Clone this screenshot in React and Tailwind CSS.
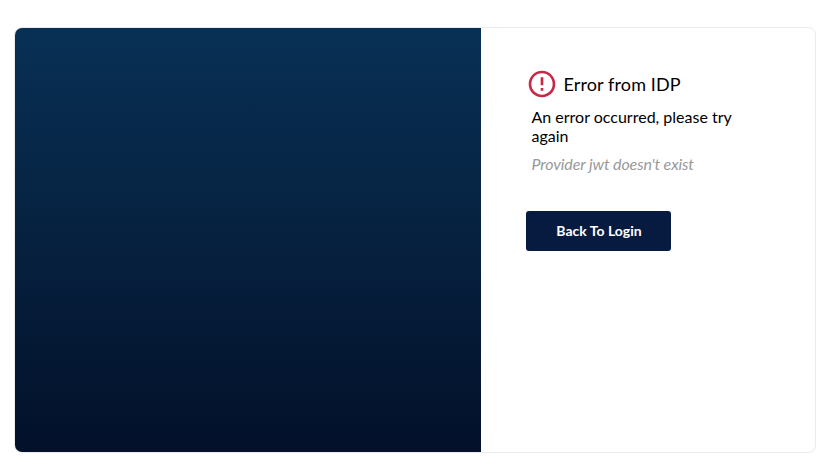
function ErrorIcon() {
  return (
    <svg viewBox="0 0 24 24" className="h-8 w-8 shrink-0" fill="#c82946">
      <path d="M11 15h2v2h-2v-2zm0-8h2v6h-2V7zm.99-5C6.47 2 2 6.48 2 12s4.47 10 9.99 10C17.52 22 22 17.52 22 12S17.52 2 11.99 2zM12 20c-4.42 0-8-3.58-8-8s3.58-8 8-8 8 3.58 8 8-3.58 8-8 8z" />
    </svg>
  );
}

export default function App() {
  return (
    <div className="h-[466px] w-full bg-white pt-[27px] pl-[14px] font-['Lato',sans-serif]">
      <main className="flex h-[426px] w-[802px] overflow-hidden rounded-lg border border-[#ebebeb]">
        <div className="w-[466px] shrink-0 bg-linear-to-b/srgb from-[#083055] via-[#06213f] to-[#03102a]" />
        <section className="flex flex-col items-start pt-10 pl-[45px] text-black">
          <div className="flex h-8 items-center gap-[5.5px]">
            <ErrorIcon />
            <h1 className="text-lg leading-6 tracking-[0.12px]">Error from IDP</h1>
          </div>
          <p className="mt-[7px] ml-[5.5px] w-[220px] text-base leading-[19px]">An error occurred, please try again</p>
          <p className="mt-[9px] ml-[5.5px] text-base leading-[19px] tracking-[-0.12px] text-[#999] italic">Provider jwt doesn't exist</p>
          <button className="mt-[38px] h-10 w-[145px] rounded-[3px] bg-[#071a40] pl-px text-sm font-bold text-white">Back To Login</button>
        </section>
      </main>
    </div>
  );
}
